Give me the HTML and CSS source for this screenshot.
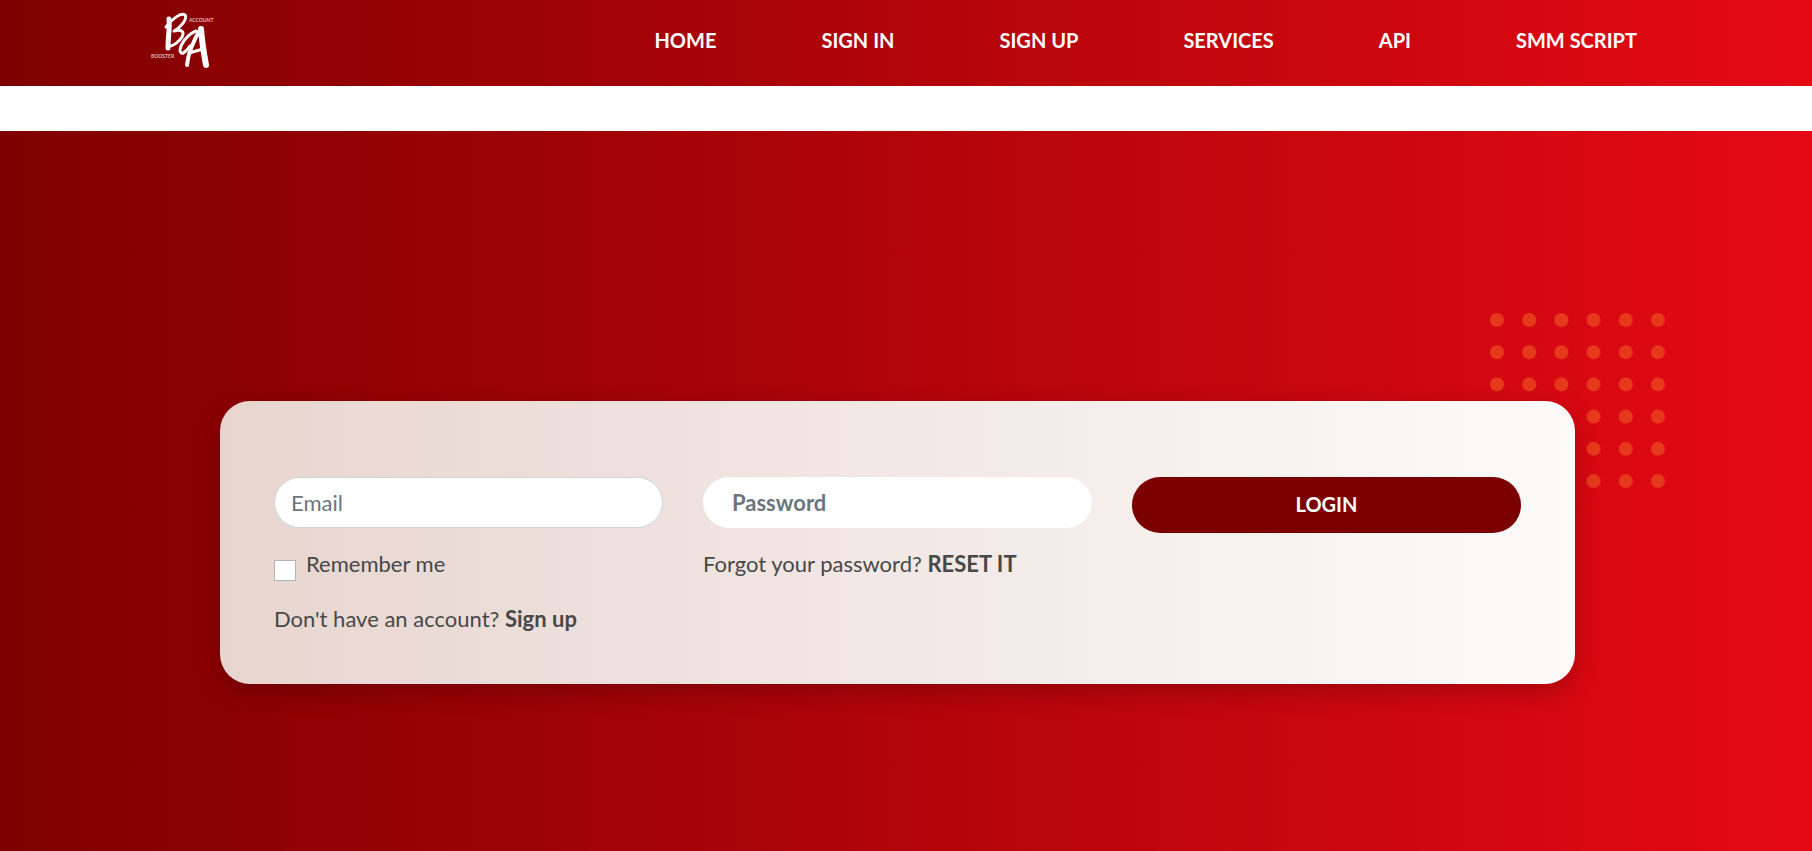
FILE: index.html
```
<!DOCTYPE html>
<html lang="en">
<head>
    <meta charset="UTF-8">
    <meta name="viewport" content="width=device-width, initial-scale=1.0">
    <title>Sign In</title>
    <link rel="stylesheet" href="styles.css">
</head>
<body>
    <header class="navbar">
        <a class="logo" href="#" aria-label="Account Booster">
            <svg width="64" height="60" viewBox="0 0 64 60">
                <g fill="none" stroke="#fff" stroke-linecap="round" stroke-linejoin="round">
                    <path stroke-width="5" d="M19 9 C20 18 18 27 18 38"/>
                    <path stroke-width="3" d="M16 17 C22 9 31 2 35 5 C38 9 30 18 24 21 C31 19 35 21 32 27 C29 32 23 36 20 36"/>
                    <path stroke-width="4" d="M37 55 C38 43 45 28 51 18"/>
                    <path stroke-width="6" d="M51 19 C52 32 54 44 56 55"/>
                    <path stroke-width="3" d="M46 21 C38 24 30 34 30 41 C31 46 36 42 40 36 M39 43 L53 39"/>
                </g>
                <text class="logo-text" x="39" y="12">ACCOUNT</text>
                <text class="logo-text" x="1" y="48">BOOSTER</text>
            </svg>
        </a>
        <nav class="menu">
            <a href="#">HOME</a>
            <a href="#">SIGN IN</a>
            <a href="#">SIGN UP</a>
            <a href="#">SERVICES</a>
            <a href="#">API</a>
            <a href="#">SMM SCRIPT</a>
        </nav>
    </header>

    <main class="hero">
        <div class="login-wrap">
            <svg class="dots" width="178" height="178" viewBox="0 0 178 178">
                <defs>
                    <pattern id="dot" width="32.2" height="32.2" patternUnits="userSpaceOnUse">
                        <circle cx="7" cy="7" r="7" fill="#e6391b"/>
                    </pattern>
                </defs>
                <rect width="178" height="178" fill="url(#dot)"/>
            </svg>
            <form class="login-card">
                <div class="column">
                    <input class="field" type="text" name="email" placeholder="Email" aria-label="Email">
                    <div class="remember">
                        <input type="checkbox" id="remember">
                        <label for="remember">Remember me</label>
                    </div>
                    <p>Don't have an account? <a href="#">Sign up</a></p>
                </div>
                <div class="column">
                    <input class="field field-password" type="password" name="password" placeholder="Password" aria-label="Password">
                    <p>Forgot your password? <a href="#">RESET IT</a></p>
                </div>
                <div class="column">
                    <button type="submit">LOGIN</button>
                </div>
            </form>
        </div>
    </main>
</body>
</html>
```
FILE: styles.css
```
* {
    box-sizing: border-box;
}
body {
    margin: 0;
    background: #fff;
    color: #484848;
    font-family: "Trebuchet MS", Lato, sans-serif;
    font-size: 22px;
    line-height: 32px;
}
a {
    color: inherit;
    font-weight: bold;
    text-decoration: none;
}
.navbar, .hero {
    background: linear-gradient(to right, #7f0000, #e50914);
}
.navbar {
    display: flex;
    justify-content: space-between;
    align-items: flex-start;
    height: 86px;
    padding: 10px 175px 0 150px;
    margin-bottom: 45px;
}
.logo svg {
    display: block;
}
.logo-text {
    fill: #fff;
    font-size: 5px;
    opacity: 0.7;
}
.menu {
    display: flex;
    gap: 105px;
    padding-top: 14px;
    color: #fff;
    font-size: 20px;
}
.hero {
    min-height: calc(100vh - 131px);
    padding: 270px 237px 167px 220px;
}
.login-wrap {
    position: relative;
}
.dots {
    position: absolute;
    top: -88px;
    right: -93px;
}
.login-card {
    position: relative;
    display: grid;
    grid-template-columns: repeat(3, 1fr);
    gap: 40px;
    padding: 76px 54px 49px;
    border-radius: 30px;
    background: linear-gradient(to right, #e8d5d0, #fcfbfa);
    box-shadow: 0 8px 24px rgba(0, 0, 0, 0.22);
}
.field {
    display: block;
    width: 100%;
    height: 51px;
    padding: 0 16px;
    border: 1px solid #ced4da;
    border-radius: 26px;
    background: #fff;
    font: inherit;
}
.field::placeholder {
    color: #6c757d;
}
.field-password {
    padding: 0 28px;
    border-color: #fff;
    font-weight: bold;
}
.column p, .remember {
    margin: 20px 0 0;
}
.remember {
    display: flex;
    gap: 10px;
}
.remember input {
    appearance: none;
    width: 22px;
    height: 21px;
    margin: 12px 0 0;
    border: 1px solid #adb5bd;
    background: #fff;
}
.column .remember + p {
    margin-top: 22px;
}
button {
    width: 100%;
    height: 56px;
    padding: 0 0 2px;
    border: 0;
    border-radius: 28px;
    background: #7b0000;
    color: #fff;
    font: inherit;
    font-size: 20px;
    font-weight: bold;
    cursor: pointer;
}
```
